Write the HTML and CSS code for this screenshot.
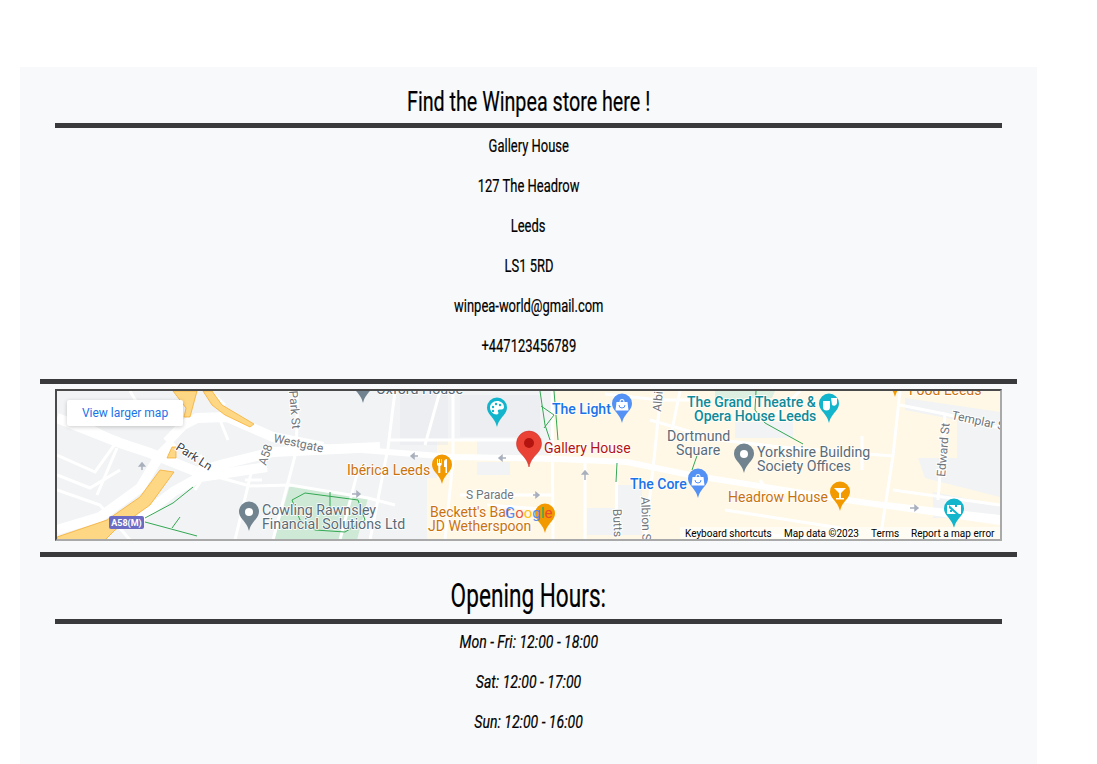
FILE: index.html
```html
<!DOCTYPE html>
<html lang="en">
  <head>
    <meta charset="utf-8" />
    <title>Winpea store</title>
    <link rel="stylesheet" href="styles.css">
  </head>
  <body>
    <div class="panel">
      <div class="inner">
        <h3 class="title"><span>Find the Winpea store here !</span></h3>
        <hr class="rule" />
        <p class="line first"><span>Gallery House</span></p>
        <p class="line"><span>127 The Headrow</span></p>
        <p class="line"><span>Leeds</span></p>
        <p class="line"><span>LS1 5RD</span></p>
        <p class="line"><span>winpea-world@gmail.com</span></p>
        <p class="line"><span>+447123456789</span></p>
      </div>
      <hr class="rule rule-wide" />
      <div class="inner">
        <div class="map">
          <!-- viewBox uses page coordinates, easier to place things -->
          <svg class="map-svg" viewBox="57 391 943 149" xmlns="http://www.w3.org/2000/svg">
            <defs>
              <path id="pin" d="M0 0c-1.500-6-4-8.500-6.500-11.500C-8.800-14.300-10-16.500-10-19.500a10 10 0 0 1 20 0c0 3-1.200 5.200-3.500 8C4-8.500 1.500-6 0 0z" />
            </defs>

            <!-- ground -->
            <rect x="57" y="391" width="943" height="149" fill="#f1f3f4" />
            <path fill="#fff8e6" d="M437 440H477V455H552V391H1000V540H427V478H437z" />
            <path fill="#f1f3f4" d="M905 398L1000 412V497L925 478L918 458H957V420L905 410zM933 492L1000 505V518H933zM477 462H510V475H477zM735 422H793V438H735zM587 508H615V535H587zM618 485H642V535H618z" />
            <path fill="#e8eaed" d="M400 391H448V445H400zM460 395H540V437H460z" opacity=".5" />
            <path fill="#ceead6" d="M290 485L368 498L357 540H274z" />
            <path fill="#dcefe0" d="M715 391H775L772 398H745L740 404H715z" />

            <!-- small roads -->
            <g class="road-s">
              <path d="M57 490L100 505L130 540M57 455L95 472L118 440L80 420M117 448L97 495M57 475L90 488L120 470" />
              <path d="M192 470L250 486L290 485L368 498L395 505M297 391V425L296 452L273 540M253 465L235 540" />
              <path d="M200 455L208 470L195 490M228 440L220 420M210 391L225 405M130 391L150 425M245 480H262" />
              <path d="M395 391L388 448L370 540M440 391L425 445M390 440L520 440M358 470L340 540" />
              <path d="M453 391V460L445 540M460 495H552M552 391L553 540M585 460V540M617 462L616 530" />
              <path d="M605 394L660 400L655 450L645 540M660 400H700M650 420L720 440L780 447L880 455L893 456" />
              <path d="M900 391L893 456L880 540M900 405L945 414L1000 428M893 490L1000 505" />
              <path d="M780 490L775 500L760 480M725 510L840 528L850 540M725 530L815 540M680 391L670 440M800 391L770 420" />
              <path d="M945 414L938 500M487 505L555 510M862 436V470" />
            </g>
            <!-- wide white roads on the left -->
            <g class="road-m">
              <path d="M57 418L120 443L150 453L197 472L220 465L273 452L380 447" />
              <path d="M167 442L183 425L197 418L227 417L273 437L323 447" />
              <path d="M57 530L100 517L140 488L160 455L173 442" />
              <path d="M140 518L173 492L200 477L267 467" />
            </g>
            <!-- main road, thinner on the right -->
            <path class="road-h" d="M323 447L453 457L557 459L627 462L690 475L847 500L1000 522" />
            <path class="road-h" d="M885 505L1000 518" />

            <!-- motorway -->
            <path fill="#fdd784" stroke="#f5a623" stroke-width=".7" d="M57 540V537L107 520L140 497L160 470L174 472L150 505L115 530L105 540zM173 391H197L190 417H184L186 408zM203 391H212L222 405L254 424L250 427L225 415L212 405zM167 458L172 447H176L176 458z" />

            <!-- tram lines -->
            <path class="tram" d="M145 518L173 503L193 487M145 522L197 536M172 528L180 517" />
            <path class="tram" d="M540 391L545 425L550 440M541 406L554 415L544 428M554 391L558 440M617 463L616 482" />
            <path class="tram" d="M756 391L755 410L765 423L803 444M699 450L692 470" />
            <path class="tram" d="M292 500L305 493L358 500L365 520L345 532L315 530L300 520L292 500M330 492V510" />

            <!-- one way arrows -->
            <g class="arrow">
              <path d="M418 456h-6M411 456l3-2.500v5zM506 458h-6M499 458l3-2.500v5zM533 495h6M539 495l-3-2.500v5zM585 480v-8M585 471l-2.500 3h5zM142 470v-6M142 463l-2.500 3h5zM352 494h7M360 494l-3-2.500v5zM910 508h8M918 508l-3-2.500v5z" />
            </g>

            <!-- street names -->
            <text class="street" transform="translate(273 442) rotate(12)">Westgate</text>
            <text class="street dark" transform="translate(175 449) rotate(33)">Park Ln</text>
            <text class="street" transform="translate(266 466) rotate(-72)">A58</text>
            <text class="street" transform="translate(289 391) rotate(85)">Park St</text>
            <text class="street" x="466" y="499">S Parade</text>
            <text class="street" transform="translate(661 412) rotate(-85)">Albion</text>
            <text class="street" transform="translate(641 497) rotate(88)">Albion St</text>
            <text class="street" transform="translate(613 509) rotate(88)">Butts</text>
            <text class="street" transform="translate(945 477) rotate(-85)">Edward St</text>
            <text class="street" transform="translate(951 419) rotate(12)">Templar St</text>

            <!-- badge -->
            <rect x="109" y="516" width="35" height="13" rx="2" fill="#6b6bc4" />
            <text class="badge" x="126.500" y="526">A58(M)</text>

            <!-- pins -->
            <use href="#pin" x="363" y="403" fill="#70838f" />
            <use href="#pin" x="497" y="427" fill="#12b5cb" />
            <path fill="#fff" d="M497 401c-4 0-7 3-7 6.500s3 7 6.500 7c2 0 2.500-1.500 1.500-2.700-.8-1 0-2.300 1.500-2.300h2c1.500 0 2.500-1 2.500-2.500 0-3.500-3-6-7-6z" />
            <g fill="#12b5cb"><circle cx="493" cy="407" r="1.200" /><circle cx="496" cy="404" r="1.200" /><circle cx="500" cy="405" r="1.200" /><circle cx="493" cy="411" r="1.200" /></g>
            <use href="#pin" x="622" y="423" fill="#5491f5" />
            <path fill="#fff" d="M616.500 402h11l1 8.500h-13zM619.500 402a2.500 3 0 0 1 5 0h-1a1.500 2 0 0 0-3 0z" />
            <path fill="none" stroke="#5491f5" d="M619 405a3 3 0 0 0 6 0" />
            <use href="#pin" x="442" y="484" fill="#f29900" />
            <path fill="#fff" d="M437 459h1v4h1v-4h1v4h1v-4h.600v6l-1.300 1v7h-2v-7l-1.300-1zM447 459v14h-1.500v-6h-1.500v-5c0-2 1.500-3 3-3z" />
            <use href="#pin" x="545" y="533" fill="#f29900" />
            <use href="#pin" x="698" y="498" fill="#5491f5" />
            <path fill="#fff" d="M692.500 477h11l1 8.500h-13zM695.500 477a2.500 3 0 0 1 5 0h-1a1.500 2 0 0 0-3 0z" />
            <path fill="none" stroke="#5491f5" d="M695 480a3 3 0 0 0 6 0" />
            <use href="#pin" x="829" y="423" fill="#12b5cb" />
            <path fill="#fff" d="M823 401h7v6a3.500 3.500 0 0 1-7 0zM831 398h6v5a3 3 0 0 1-5 2z" />
            <use href="#pin" x="744" y="473" fill="#70838f" />
            <circle cx="744" cy="454" r="4" fill="#fff" />
            <use href="#pin" x="249" y="531" fill="#70838f" />
            <circle cx="249" cy="512" r="4" fill="#fff" />
            <use href="#pin" x="840" y="511" fill="#f29900" />
            <path fill="#fff" d="M834 488h12l-5 5v5h3v1.500h-8V498h3v-5z" />
            <use href="#pin" x="954" y="528" fill="#12b5cb" />
            <path fill="#fff" d="M947 505h14v9h-14z" />
            <path fill="#12b5cb" d="M949 505l10 9h-3l-7-6zM955 505h2v2h-2zM950 510h2v2h-2z" />
            <use href="#pin" x="895" y="397" fill="#f29900" />

            <!-- red marker -->
            <path fill="#ea4335" stroke="#c5221f" stroke-width=".5" d="M529 467c-1.500-7-5-10-8-13.500-2.800-3.200-4.500-6-4.500-10a12.500 12.500 0 0 1 25 0c0 4-1.700 6.800-4.500 10-3 3.500-6.500 6.500-8 13.500z" />
            <circle cx="529" cy="443" r="5" fill="#b3140f" />

            <!-- place names -->
            <text class="place red" x="544" y="453">Gallery House</text>
            <text class="place blue" x="552" y="414">The Light</text>
            <text class="place blue" x="630" y="489">The Core</text>
            <text class="place teal" x="687" y="407">The Grand Theatre &amp;</text>
            <text class="place teal" x="694" y="421">Opera House Leeds</text>
            <text class="place grey" x="667" y="441">Dortmund</text>
            <text class="place grey" x="676" y="455">Square</text>
            <text class="place grey" x="757" y="457">Yorkshire Building</text>
            <text class="place grey" x="757" y="471">Society Offices</text>
            <text class="place grey" x="262" y="515">Cowling Rawnsley</text>
            <text class="place grey" x="262" y="529">Financial Solutions Ltd</text>
            <text class="place grey" x="376" y="394">Oxford House</text>
            <text class="place orange" x="347" y="475">Ibérica Leeds</text>
            <text class="place orange" x="430" y="517">Beckett's Bar</text>
            <text class="place orange" x="428" y="531">JD Wetherspoon</text>
            <text class="place orange" x="728" y="502">Headrow House</text>
            <text class="place orange" x="909" y="395">Food Leeds</text>

            <!-- google logo -->
            <text class="logo" x="505" y="518"><tspan fill="#4285f4">G</tspan><tspan fill="#ea4335">o</tspan><tspan fill="#fbbc05">o</tspan><tspan fill="#4285f4">g</tspan><tspan fill="#34a853">l</tspan><tspan fill="#ea4335">e</tspan></text>

            <!-- footer strip -->
            <rect x="680" y="527" width="320" height="13" fill="#fff" opacity=".55" />
            <text class="small" x="685" y="537">Keyboard shortcuts</text>
            <text class="small" x="784" y="537">Map data ©2023</text>
            <text class="small" x="871" y="537">Terms</text>
            <text class="small" x="911" y="537">Report a map error</text>
          </svg>
          <a class="larger" href="#">View larger map</a>
        </div>
      </div>
      <hr class="rule rule-wide rule-after" />
      <div class="inner">
        <h2 class="title title-big"><span>Opening Hours:</span></h2>
        <hr class="rule rule-tight" />
        <p class="line first hours"><span>Mon - Fri: 12:00 - 18:00</span></p>
        <p class="line hours"><span>Sat: 12:00 - 17:00</span></p>
        <p class="line hours"><span>Sun: 12:00 - 16:00</span></p>
      </div>
    </div>
  </body>
</html>
```

FILE: styles.css
```css
body {
  margin: 0;
  padding-top: 67px;
  background-color: #fff;
  color: #000;
  font-family: "Roboto", "Liberation Sans", sans-serif;
}

.panel {
  width: 977px;
  margin-left: 20px;
  padding: 0 20px 14px;
  background-color: #f8f9fa;
}

.inner {
  padding: 0 15px;
}

/* the store font is a narrow one, so squeeze Roboto to its widths */
.title span,
.line span {
  display: inline-block;
  white-space: nowrap;
  -webkit-text-stroke: 0.2px #000;
}

.title {
  margin: 0;
  padding-top: 17px;
  font-size: 27px;
  font-weight: 400;
  line-height: 36px;
  text-align: center;
}

.title span {
  transform: scaleX(0.73);
}

.title-big {
  font-size: 33px;
  line-height: 44px;
}

.title-big span {
  transform: scaleX(0.686);
}

.rule {
  height: 5px;
  margin: 3px 0 0;
  border: 0;
  background-color: #3a3a3c;
}

.rule-tight {
  margin-top: 1px;
}

.rule-wide {
  margin: 21px 0 0;
}

.rule-after {
  margin-top: 11px;
}

.line {
  margin: 0 0 16px;
  font-size: 18px;
  line-height: 24px;
  text-align: center;
}

.line span {
  transform: scaleX(0.72);
}

.first {
  margin-top: 6px;
}

.hours {
  font-style: italic;
}

.hours span {
  transform: scaleX(0.78);
}

/* map */
.map {
  position: relative;
  height: 148px;
  margin-top: 5px;
  border-style: solid;
  border-width: 2px;
  border-color: #4a4a4a #a9a9a9 #a9a9a9 #4a4a4a;
  overflow: hidden;
}

.map-svg {
  display: block;
  width: 943px;
  height: 149px;
  font-family: "Roboto", sans-serif;
}

.larger {
  position: absolute;
  top: 9px;
  left: 10px;
  width: 116px;
  height: 26px;
  border-radius: 2px;
  background-color: #fff;
  box-shadow: rgba(0, 0, 0, 0.2) 0 1px 4px;
  color: #1a73e8;
  font-size: 12px;
  line-height: 26px;
  text-align: center;
  text-decoration: none;
}

.road-s path {
  fill: none;
  stroke: #fff;
  stroke-width: 3;
}

.road-m path {
  fill: none;
  stroke: #fff;
  stroke-width: 10;
}

.road-h {
  fill: none;
  stroke: #fff;
  stroke-width: 6;
}

.tram {
  fill: none;
  stroke: #34a853;
  stroke-width: 1;
}

.arrow path {
  fill: #a9b0bd;
  stroke: #a9b0bd;
  stroke-width: 1.500;
}

.street {
  fill: #70757a;
  font-size: 12px;
  paint-order: stroke;
  stroke: #fff;
  stroke-width: 2px;
}

.dark {
  fill: #3c4043;
}

.badge {
  fill: #fff;
  font-size: 9px;
  font-weight: 700;
  text-anchor: middle;
}

.place {
  font-size: 14px;
  paint-order: stroke;
  stroke: #fff;
  stroke-width: 1.500px;
}

.red { fill: #b31412; }
.blue { fill: #1a73e8; font-weight: 500; }
.teal { fill: #0f8a97; font-weight: 500; }
.grey { fill: #5b6b76; font-size: 14.200px; }
.orange { fill: #c9720f; }

.logo {
  font-size: 15px;
  font-weight: 400;
  opacity: 0.9;
}

.small {
  fill: #000;
  font-size: 10px;
}
```
